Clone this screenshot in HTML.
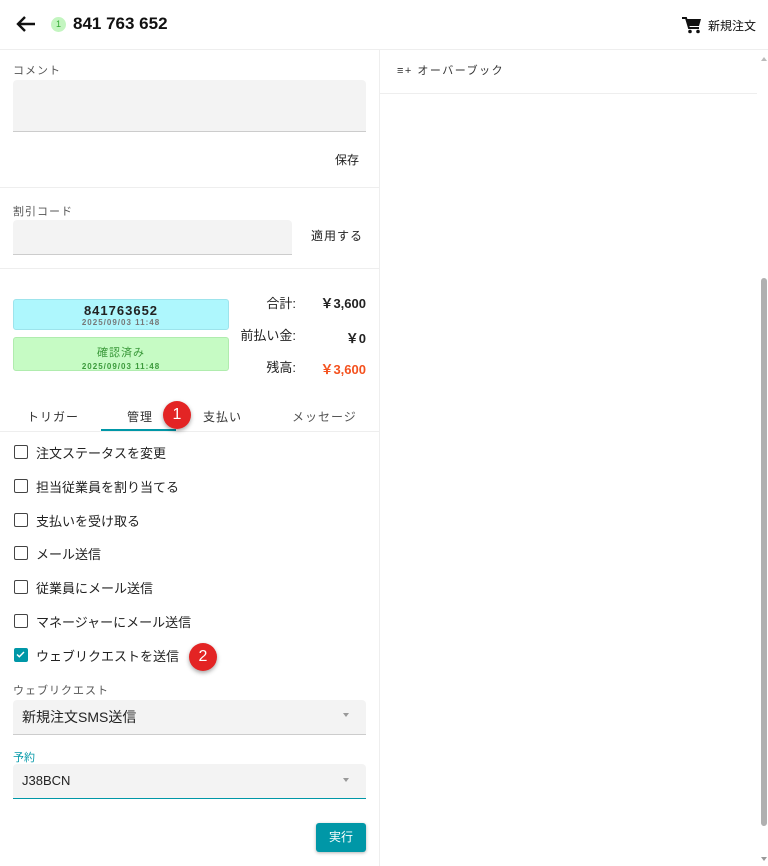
<!DOCTYPE html>
<html><head><meta charset="utf-8"><style>
*{box-sizing:border-box;margin:0;padding:0}
body{width:768px;height:866px;overflow:hidden;background:#fff;font-family:"Liberation Sans","Noto Sans CJK JP",sans-serif;color:#222;position:relative}
.a{position:absolute}
.hdr{left:0;top:0;width:768px;height:50px;border-bottom:1px solid #eee}
.lbl{font-size:11px;color:#555;letter-spacing:1px}
.field{background:#f3f3f3;border-bottom:1px solid #ccc;border-radius:4px 4px 0 0}
.cb{left:14px;width:14px;height:14px;border:1.5px solid #444;border-radius:2px}
.ct{left:36px;font-size:13px;color:#222}
.badge{width:28px;height:28px;border-radius:50%;background:#e32424;color:#fff;font-size:16px;text-align:center;line-height:28px;box-shadow:0 2px 4px rgba(0,0,0,.35)}
.tab{top:408px;font-size:12px;letter-spacing:1px;color:#333}
.arrow{width:0;height:0;border-left:3px solid transparent;border-right:3px solid transparent;border-top:4px solid #999}
</style></head><body>
<div class="a hdr"></div>
<svg class="a" style="left:16px;top:15px" width="20" height="18" viewBox="0 0 20 18"><path d="M19 9H3M9 2L2 9l7 7" stroke="#111" stroke-width="2.4" fill="none"/></svg>
<div class="a" style="left:51px;top:17px;width:15px;height:15px;border-radius:50%;background:#c3f5c0;font-size:9px;text-align:center;line-height:15px;color:#3a3">1</div>
<div class="a" style="left:73px;top:14px;font-size:17px;font-weight:bold;color:#111">841 763 652</div>
<svg class="a" style="left:682px;top:16px" width="20" height="18" viewBox="0 0 20 18"><path d="M0 2h4l3 10h10" fill="none" stroke="#111" stroke-width="2"/><path d="M5 3h14l-2 7H7z" fill="#111"/><circle cx="8" cy="15.5" r="1.8" fill="#111"/><circle cx="16" cy="15.5" r="1.8" fill="#111"/></svg>
<div class="a" style="left:708px;top:17px;font-size:12px;color:#111">新規注文</div>

<div class="a" style="left:379px;top:50px;width:1px;height:816px;background:#eee"></div>
<div class="a" style="left:380px;top:93px;width:377px;height:1px;background:#eee"></div>
<div class="a" style="left:397px;top:62px;font-size:11px;color:#333;letter-spacing:1.5px">≡+ オーバーブック</div>
<div class="a" style="left:761px;top:57px;border-left:3px solid transparent;border-right:3px solid transparent;border-bottom:4px solid #bbb"></div>
<div class="a" style="left:761px;top:278px;width:6px;height:548px;background:#b0b0b0;border-radius:3px"></div>
<div class="a" style="left:761px;top:857px;border-left:3px solid transparent;border-right:3px solid transparent;border-top:4px solid #999"></div>

<div class="a lbl" style="left:13px;top:62px">コメント</div>
<div class="a field" style="left:13px;top:80px;width:353px;height:52px"></div>
<div class="a" style="left:335px;top:151px;font-size:12px">保存</div>
<div class="a" style="left:0;top:187px;width:379px;height:1px;background:#eee"></div>
<div class="a lbl" style="left:13px;top:203px">割引コード</div>
<div class="a field" style="left:13px;top:220px;width:279px;height:35px"></div>
<div class="a" style="left:311px;top:227px;font-size:12px;letter-spacing:1px">適用する</div>
<div class="a" style="left:0;top:268px;width:379px;height:1px;background:#eee"></div>

<div class="a" style="left:13px;top:299px;width:216px;height:31px;background:#aef7fd;border:1px solid #9de4ec;border-radius:3px;text-align:center">
<div style="font-size:13px;font-weight:bold;letter-spacing:1px;margin-top:3px;color:#222">841763652</div>
<div style="font-size:8px;color:#777;letter-spacing:1px;font-weight:bold">2025/09/03 11:48</div></div>
<div class="a" style="left:13px;top:337px;width:216px;height:34px;background:#c6fbc4;border:1px solid #b0ecae;border-radius:3px;text-align:center">
<div style="font-size:11px;color:#3b9a3b;margin-top:6px;letter-spacing:1px">確認済み</div>
<div style="font-size:8px;color:#3b9a3b;letter-spacing:1px;margin-top:2px;font-weight:bold">2025/09/03 11:48</div></div>
<div class="a" style="left:240px;top:296px;width:56px;text-align:right;font-size:13px;line-height:16px">合計:<br><br>前払い金:<br><br>残高:</div>
<div class="a" style="left:300px;top:296px;width:66px;text-align:right;font-size:13px;line-height:16px;font-weight:bold">￥3,600</div>
<div class="a" style="left:300px;top:328px;width:66px;text-align:right;font-size:13px;font-weight:bold">￥0</div>
<div class="a" style="left:300px;top:359px;width:66px;text-align:right;font-size:13px;font-weight:bold;color:#f4511e">￥3,600</div>

<div class="a tab" style="left:27px">トリガー</div>
<div class="a tab" style="left:127px">管理</div>
<div class="a tab" style="left:203px">支払い</div>
<div class="a tab" style="left:292px;color:#555">メッセージ</div>
<div class="a" style="left:101px;top:429px;width:75px;height:2px;background:#0097a7"></div>
<div class="a" style="left:0;top:431px;width:379px;height:1px;background:#eee"></div>
<div class="a badge" style="left:163px;top:401px">1</div>

<div class="a cb" style="top:445px"></div><div class="a ct" style="top:443px">注文ステータスを変更</div>
<div class="a cb" style="top:479px"></div><div class="a ct" style="top:477px">担当従業員を割り当てる</div>
<div class="a cb" style="top:513px"></div><div class="a ct" style="top:511px">支払いを受け取る</div>
<div class="a cb" style="top:546px"></div><div class="a ct" style="top:544px">メール送信</div>
<div class="a cb" style="top:580px"></div><div class="a ct" style="top:578px">従業員にメール送信</div>
<div class="a cb" style="top:614px"></div><div class="a ct" style="top:612px">マネージャーにメール送信</div>
<div class="a cb" style="top:648px;background:#0097a7;border-color:#0097a7"><svg width="11" height="11" viewBox="0 0 11 11" style="display:block"><path d="M2 5.5l2.3 2.3L9 3" stroke="#fff" stroke-width="1.4" fill="none"/></svg></div>
<div class="a ct" style="top:646px">ウェブリクエストを送信</div>
<div class="a badge" style="left:189px;top:643px">2</div>

<div class="a lbl" style="left:13px;top:682px">ウェブリクエスト</div>
<div class="a field" style="left:13px;top:700px;width:353px;height:35px"></div>
<div class="a" style="left:22px;top:707px;font-size:14px">新規注文SMS送信</div>
<div class="a arrow" style="left:343px;top:713px"></div>
<div class="a" style="left:13px;top:749px;font-size:11px;color:#0097a7">予約</div>
<div class="a field" style="left:13px;top:764px;width:353px;height:35px;border-bottom:1.5px solid #0097a7"></div>
<div class="a" style="left:22px;top:773px;font-size:13px">J38BCN</div>
<div class="a arrow" style="left:343px;top:778px"></div>
<div class="a" style="left:316px;top:823px;width:50px;height:29px;background:#0097a7;border-radius:3px;color:#fff;font-size:12px;text-align:center;line-height:29px;box-shadow:0 1px 3px rgba(0,0,0,.3)">実行</div>
</body></html>
